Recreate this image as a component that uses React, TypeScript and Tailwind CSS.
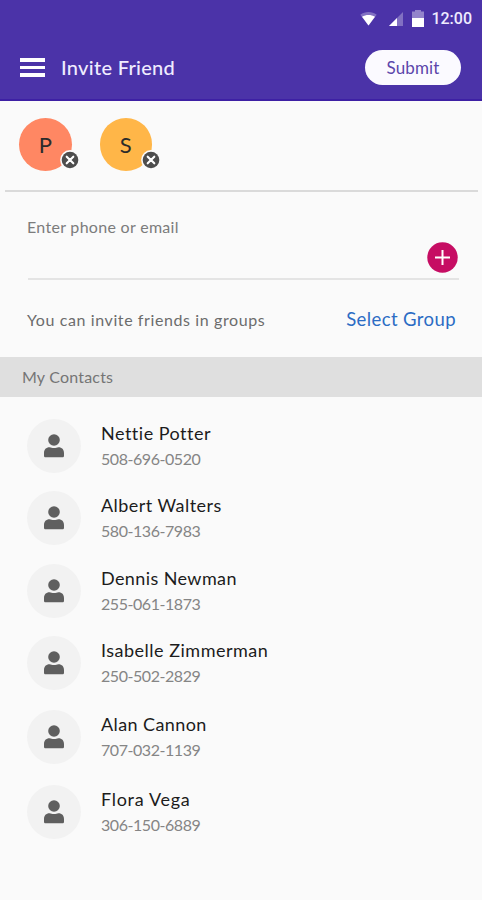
import React from "react";
import clsx from "clsx";

// Row heights differ a little, so each contact carries its own
const contacts = [
  { name: "Nettie Potter", phone: "508-696-0520", row: "h-[72px]", spacing: "tracking-[0.5px]" },
  { name: "Albert Walters", phone: "580-136-7983", row: "h-[73px]", spacing: "tracking-[0.45px]" },
  { name: "Dennis Newman", phone: "255-061-1873", row: "h-[72px]", spacing: "tracking-[0.4px]" },
  { name: "Isabelle Zimmerman", phone: "250-502-2829", row: "h-[74px]", spacing: "tracking-[0.5px]" },
  { name: "Alan Cannon", phone: "707-032-1139", row: "h-[75px]", spacing: "tracking-[0.4px]" },
  { name: "Flora Vega", phone: "306-150-6889", row: "h-[72px]", spacing: "tracking-[0.7px]" },
];

const invited = [
  { letter: "P", color: "bg-[#ff8763]" },
  { letter: "S", color: "bg-[#ffb648]" },
];

const StatusIcons: React.FC = () => (
  <>
    <svg width="17" height="14" viewBox="0 0 17 14">
      <path d="M0.3 2.8C5 -0.8 12 -0.8 16.7 2.8L8.5 13.6Z" fill="#fff" opacity="0.3" />
      <path d="M2 4.8C6 2.4 11 2.4 15 4.8L8.5 13.6Z" fill="#fff" />
    </svg>
    <svg className="ml-[12px]" width="14" height="14" viewBox="0 0 14 14">
      <path d="M14 0V14H0Z" fill="#fff" opacity="0.3" />
      <path d="M8 6V14H0Z" fill="#fff" />
    </svg>
    <svg className="ml-[9px]" width="12" height="17" viewBox="0 0 12 17">
      <path d="M3 0h6v1.6H12V8H0V1.6h3Z" fill="#fff" opacity="0.4" />
      <path d="M0 8h12v9H0Z" fill="#fff" />
    </svg>
  </>
);

const PersonIcon: React.FC = () => (
  <svg width="20" height="24" viewBox="0 0 20 24">
    <circle cx="10" cy="6" r="5.8" fill="#5f5f5f" />
    <path
      d="M5.6 13.2C7 13.2 8 14 10 14s3-.8 4.4-.8C18 13.2 20 15.6 20 19v2.7c0 1-.7 1.6-1.6 1.6H1.6C.7 23.3 0 22.7 0 21.7V19c0-3.4 2-5.8 5.6-5.8Z"
      fill="#5f5f5f"
    />
  </svg>
);

const App: React.FC = () => {
  return (
    <div className="w-full h-[900px] overflow-hidden bg-[#fafafa] font-['Lato','Liberation_Sans',sans-serif]">
      {/* Header */}
      <header className="h-[101px] bg-[#4b33a8] border-b-2 border-[#3d20a4]">
        <div className="h-[37px] flex items-center justify-end pr-[10px]">
          <StatusIcons />
          <span className="ml-[7px] text-[16px] font-medium leading-none text-[#eeeaff] font-['Roboto',sans-serif]">
            12:00
          </span>
        </div>
        <div className="h-[61px] flex items-center pl-[20px] pr-[21px]">
          <div className="flex flex-col gap-[4px] w-[25px]">
            <span className="h-[3.5px] bg-white" />
            <span className="h-[3.5px] bg-white" />
            <span className="h-[3.5px] bg-white" />
          </div>
          <h1 className="ml-[16px] pb-[2px] text-[20px] font-medium tracking-[0.3px] text-[#f0ecff]">Invite Friend</h1>
          <button className="ml-auto w-[96px] h-[35px] rounded-full bg-[#fbfaff] text-[17px] tracking-[0.1px] text-[#5b46ab]">
            Submit
          </button>
        </div>
      </header>

      {/* Invited people */}
      <div className="h-[91px] ml-[5px] mr-[4px] pt-[17px] pl-[14px] flex gap-[28px] border-b-2 border-[#dadada]">
        {invited.map((item) => (
          <div
            key={item.letter}
            className={clsx(
              "relative w-[52.5px] h-[53px] rounded-full flex items-center justify-center text-[22px] text-[#2b2b2b]",
              item.color
            )}
          >
            {item.letter}
            <svg className="absolute left-[41px] top-[32px]" width="20" height="20" viewBox="0 0 20 20">
              <circle cx="10" cy="10" r="9.9" fill="#fafafa" />
              <circle cx="10" cy="10" r="8.3" fill="#4d4d4d" />
              <path d="M6.7 6.7l6.6 6.6M13.3 6.7l-6.6 6.6" stroke="#fff" strokeWidth="2.1" strokeLinecap="round" />
            </svg>
          </div>
        ))}
      </div>

      {/* Phone or email field */}
      <div className="h-[88px] ml-[28px] mr-[23px] pt-[24px] flex justify-between border-b-2 border-[#e4e4e4]">
        <span className="-ml-px text-[16px] leading-[22px] tracking-[0.3px] text-[#7c7c7c]">Enter phone or email</span>
        <svg className="mt-[26px] mr-px" width="31" height="31" viewBox="0 0 31 31">
          <circle cx="15.5" cy="15.5" r="15.2" fill="#c60d63" />
          <path d="M15.5 8v15M8 15.5h15" stroke="#fff" strokeWidth="2" />
        </svg>
      </div>

      <div className="h-[77px] pl-[27px] pr-[26px] pt-[3px] flex items-center justify-between">
        <span className="text-[16px] tracking-[0.6px] text-[#6c6c6c]">You can invite friends in groups</span>
        <span className="text-[18.5px] tracking-[0.4px] text-[#2b6cc4]">Select Group</span>
      </div>

      <div className="h-[40px] pl-[22px] flex items-center bg-[#dfdfdf] text-[16px] tracking-[0.2px] text-[#757575]">
        My Contacts
      </div>

      {/* Contact list */}
      <ul className="pt-[22px] pl-[27px]">
        {contacts.map((contact) => (
          <li key={contact.phone} className={clsx("flex items-start", contact.row)}>
            <div className="w-[54px] h-[54px] rounded-full bg-[#f2f2f2] flex items-center justify-center">
              <PersonIcon />
            </div>
            <div className="ml-[20px] pt-px">
              <div className="leading-[26px]">
                <span className={clsx("text-[18px] text-[#1c1c1c]", contact.spacing)}>{contact.name}</span>
              </div>
              <div className="leading-[24px]">
                <span className="text-[16px] tracking-[-0.45px] text-[#858585]">{contact.phone}</span>
              </div>
            </div>
          </li>
        ))}
      </ul>
    </div>
  );
};

export default App;
